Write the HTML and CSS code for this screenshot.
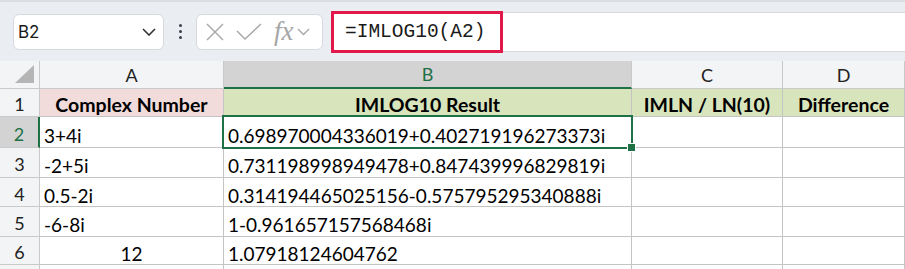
FILE: index.html
```html
<!DOCTYPE html>
<html lang="en">
<head>
    <meta charset="UTF-8">
    <meta name="viewport" content="width=device-width, initial-scale=1.0">
    <title>IMLOG10</title>
    <link rel="stylesheet" href="styles.css">
</head>
<body>
    <div class="toolbar">
        <div class="namebox">
            <span class="cellref">B2</span>
            <svg class="chev" width="14" height="8" viewBox="0 0 14 8"><path d="M1 1 L7 7 L13 1" fill="none" stroke="#333" stroke-width="1.6"/></svg>
        </div>
        <div class="dots"><i></i><i></i><i></i></div>
        <div class="fxbox">
            <svg width="20" height="20" viewBox="0 0 20 20"><path d="M2 2 L18 18 M18 2 L2 18" stroke="#a6a6a6" stroke-width="1.4"/></svg>
            <svg width="26" height="18" viewBox="0 0 26 18"><path d="M1 8 L9 16 L25 1" fill="none" stroke="#a6a6a6" stroke-width="1.4"/></svg>
            <span class="fx">fx</span>
            <svg width="13" height="8" viewBox="0 0 13 8"><path d="M1 1 L6.5 6.5 L12 1" fill="none" stroke="#a6a6a6" stroke-width="1.4"/></svg>
        </div>
        <div class="formula">
            <div class="formula-mark">=IMLOG10(A2)</div>
        </div>
    </div>

    <div class="sheet">
        <div class="hd corner"><span class="tri"></span></div>
        <div class="hd col">A</div>
        <div class="hd col sel-col">B</div>
        <div class="hd col">C</div>
        <div class="hd col">D</div>

        <div class="hd row">1</div>
        <div class="cell title pink">Complex Number</div>
        <div class="cell title green">IMLOG10 Result</div>
        <div class="cell title green">IMLN / LN(10)</div>
        <div class="cell title green">Difference</div>

        <div class="hd row sel-row">2</div>
        <div class="cell">3+4i</div>
        <div class="cell active">0.698970004336019+0.402719196273373i</div>
        <div class="cell"></div>
        <div class="cell"></div>

        <div class="hd row">3</div>
        <div class="cell">-2+5i</div>
        <div class="cell">0.731198998949478+0.847439996829819i</div>
        <div class="cell"></div>
        <div class="cell"></div>

        <div class="hd row">4</div>
        <div class="cell">0.5-2i</div>
        <div class="cell">0.314194465025156-0.575795295340888i</div>
        <div class="cell"></div>
        <div class="cell"></div>

        <div class="hd row">5</div>
        <div class="cell">-6-8i</div>
        <div class="cell">1-0.961657157568468i</div>
        <div class="cell"></div>
        <div class="cell"></div>

        <div class="hd row">6</div>
        <div class="cell center">12</div>
        <div class="cell">1.07918124604762</div>
        <div class="cell"></div>
        <div class="cell"></div>

        <div class="hd row"></div>
        <div class="cell"></div>
        <div class="cell"></div>
        <div class="cell"></div>
        <div class="cell"></div>
    </div>
</body>
</html>
```

FILE: styles.css
```css
body {
    margin: 0;
    width: 905px;
    height: 269px;
    overflow: hidden;
    font-family: Lato, "Open Sans", sans-serif;
    background: #fff;
}
.toolbar {
    height: 61px;
    box-sizing: border-box;
    background: #eaedf1;
    border-top: 2px solid #dadde1;
    display: flex;
    align-items: center;
    padding-left: 13px;
}
.namebox {
    width: 151px;
    height: 36px;
    box-sizing: border-box;
    background: #fff;
    border: 1px solid #d6d9dd;
    border-radius: 6px;
    display: flex;
    align-items: center;
    justify-content: space-between;
    padding: 0 7px 0 4px;
}
.cellref {
    font-family: Inter, "Noto Sans", sans-serif;
    font-size: 17px;
    color: #1b1b1b;
}
.dots {
    width: 32px;
    display: flex;
    flex-direction: column;
    align-items: center;
    gap: 3px;
}
.dots i {
    width: 3px;
    height: 3px;
    border-radius: 50%;
    background: #3b3f45;
}
.fxbox {
    width: 127px;
    height: 36px;
    box-sizing: border-box;
    background: #fff;
    border: 1px solid #d6d9dd;
    border-radius: 6px;
    display: flex;
    align-items: center;
    gap: 11px;
    padding-left: 8px;
}
.fx {
    font-family: "Liberation Serif", serif;
    font-style: italic;
    font-size: 27px;
    color: #a6a6a6;
    margin-left: 1px;
    margin-right: -8px;
    line-height: 1;
}
.formula {
    flex: 1;
    height: 40px;
    margin-left: 8px;
    box-sizing: border-box;
    background: #fff;
    border-radius: 6px 0 0 6px;
    border: 1px solid #d6d9dd;
    border-right: none;
    display: flex;
    align-items: center;
}
.formula-mark {
    width: 172px;
    height: 42px;
    margin-left: -1px;
    box-sizing: border-box;
    border: 3px solid #e0194a;
    font-family: "Liberation Mono", monospace;
    font-size: 19.5px;
    color: #1a1a1a;
    padding-left: 11px;
    line-height: 36px;
}
.sheet {
    display: grid;
    grid-template-columns: 40px 184px 408px 151px 1fr;
    grid-template-rows: 28px 28px 31px 30px 29px 30px 28px 10px;
}
.hd {
    background: #f3f4f5;
    border-right: 1px solid #c9c9c9;
    border-bottom: 1px solid #c9c9c9;
    color: #222;
    font-size: 18px;
    display: flex;
    align-items: center;
    justify-content: center;
    box-sizing: border-box;
}
.row {
    padding-top: 3px;
}
.corner {
    justify-content: flex-end;
    align-items: flex-end;
    padding: 0 5px 5px 0;
}
.tri {
    width: 0;
    height: 0;
    border-left: 19px solid transparent;
    border-bottom: 18px solid #b5b5b5;
}
.sel-col {
    background: #d3d3d3;
    color: #1e7145;
    border-bottom: 2px solid #1e7145;
}
.sel-row {
    background: #d3d3d3;
    color: #1e7145;
    border-right: 2px solid #1e7145;
}
.cell {
    border-right: 1px solid #c4c4c4;
    border-bottom: 1px solid #c4c4c4;
    font-size: 19px;
    color: #000;
    padding: 6px 4px 0;
    display: flex;
    align-items: center;
    white-space: nowrap;
    box-sizing: border-box;
}
.title {
    font-size: 19.5px;
    font-weight: bold;
    justify-content: center;
    padding: 3px 0 0;
}
.pink {
    background: #f2dcdb;
}
.green {
    background: #d8e4bc;
}
.center {
    justify-content: center;
}
.active {
    position: relative;
}
.active::after {
    content: "";
    position: absolute;
    left: -2px;
    top: -2px;
    right: -2px;
    bottom: -2px;
    border: 2px solid #1e7145;
}
.active::before {
    content: "";
    position: absolute;
    right: -5px;
    bottom: -5px;
    width: 7px;
    height: 7px;
    background: #1e7145;
    border: 1px solid #fff;
    z-index: 2;
}
```
